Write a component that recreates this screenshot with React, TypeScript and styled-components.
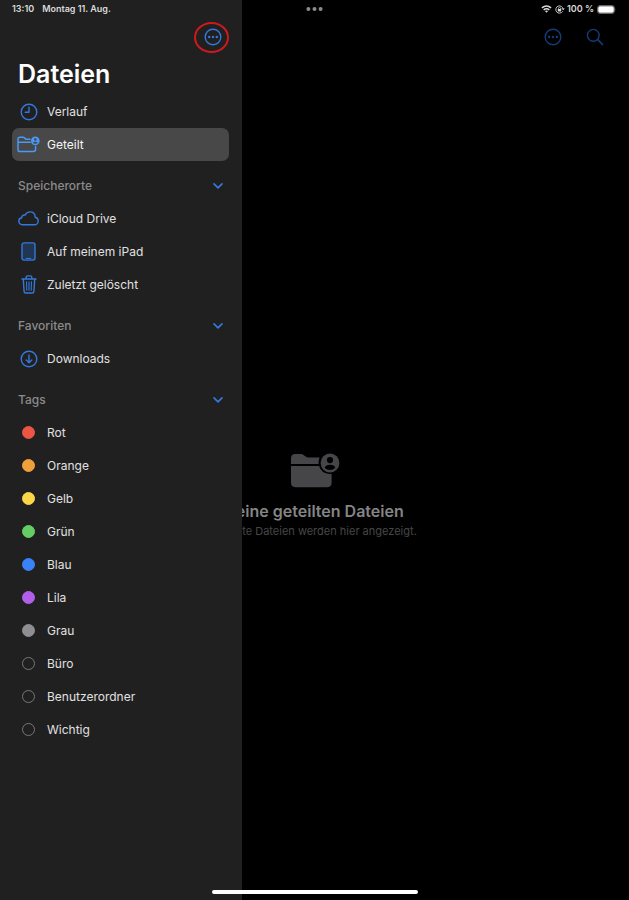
import React from "react";
import styled, { createGlobalStyle } from "styled-components";

const GlobalStyle = createGlobalStyle`
  *, *::before, *::after { box-sizing: border-box; }
  html, body { margin: 0; background: #000; }
  body, button, h1, h2, p {
    font-family: Inter, "Liberation Sans", sans-serif;
  }
  h1, h2, p, ul { margin: 0; padding: 0; }
  ul { list-style: none; }
`;

const blue = "#3478dc";

const Screen = styled.div`
  display: grid;
  grid-template-columns: 242px 1fr;
  grid-template-rows: 18px 1fr 10px;
  min-height: 100vh;
  background: #000;
  color: #e6e6e6;
`;

const StatusBar = styled.header`
  grid-column: 1 / -1;
  grid-row: 1;
  z-index: 3;
  display: grid;
  grid-template-columns: 1fr auto 1fr;
  align-items: center;
  padding: 0 12px;
  font-size: 9px;
  font-weight: 600;
  line-height: 18px;
  color: #dadada;
`;

const StatusGroup = styled.div<{ $end?: boolean; $gap: number }>`
  display: flex;
  align-items: center;
  justify-content: ${(p) => (p.$end ? "flex-end" : "flex-start")};
  gap: ${(p) => p.$gap}px;
  white-space: nowrap;
`;

const Icon = styled.svg`
  display: block;
  flex: none;
  overflow: visible;
  fill: none;
  stroke: currentColor;
  stroke-width: 1.4;
  stroke-linecap: round;
  stroke-linejoin: round;
`;

const Sidebar = styled.aside`
  grid-column: 1;
  grid-row: 1 / -1;
  z-index: 2;
  padding: 18px 13px 24px 12px;
  background: #202020;
`;

const SidebarTools = styled.div`
  display: flex;
  justify-content: flex-end;
  height: 38px;
  padding-right: 4px;
`;

const IconButton = styled.button<{ $dim?: boolean }>`
  position: relative;
  display: grid;
  place-items: center;
  width: 24px;
  height: 38px;
  padding: 0;
  border: 0;
  background: none;
  color: ${(p) => (p.$dim ? "#143c78" : blue)};
  cursor: pointer;
`;

const Ring = styled.span`
  position: absolute;
  top: 4px;
  left: -7px;
  width: 35px;
  height: 31px;
  border: 2px solid #d0191c;
  border-radius: 50%;
  pointer-events: none;
`;

const Title = styled.h1`
  padding: 1px 6px 4px;
  color: #fff;
  font-size: 25px;
  font-weight: 600;
  line-height: 34px;
`;

const SectionToggle = styled.button`
  display: flex;
  align-items: center;
  justify-content: space-between;
  width: 100%;
  height: 41px;
  padding: 8px 6px 0;
  border: 0;
  background: none;
  color: #8b8b8b;
  font-size: 12px;
  font-weight: 500;
  line-height: 18px;
  cursor: pointer;

  svg {
    color: ${blue};
  }
`;

const Row = styled.button<{ $active?: boolean }>`
  display: flex;
  align-items: center;
  gap: 7px;
  width: 100%;
  height: 33px;
  padding: 0 5px;
  border: 0;
  border-radius: 7px;
  background: ${(p) => (p.$active ? "#484848" : "none")};
  color: ${(p) => (p.$active ? "#f6f6f6" : "#e0e0e0")};
  font-size: 12px;
  line-height: 18px;
  text-align: left;
  cursor: pointer;
`;

const Glyph = styled.span<{ $bright?: boolean }>`
  display: grid;
  place-items: center;
  width: 23px;
  flex: none;
  color: ${(p) => (p.$bright ? "#4a98f7" : blue)};
`;

const Dot = styled.span<{ $color?: string }>`
  width: 13px;
  height: 13px;
  border-radius: 50%;
  border: 1px solid ${(p) => p.$color ?? "#777"};
  background: ${(p) => p.$color ?? "transparent"};
`;

const Content = styled.main`
  grid-column: 1 / -1;
  grid-row: 1 / -1;
  display: grid;
  grid-template-rows: 56px 1fr;
`;

const Toolbar = styled.div`
  display: flex;
  justify-content: flex-end;
  gap: 18px;
  padding: 18px 22px 0 0;
`;

const EmptyState = styled.section`
  display: flex;
  flex-direction: column;
  align-items: center;
  justify-content: center;
  padding-top: 36px;
  text-align: center;
  white-space: nowrap;
`;

const EmptyTitle = styled.h2`
  margin-top: 12px;
  color: #858585;
  font-size: 16px;
  font-weight: 600;
  line-height: 22px;
`;

const EmptyText = styled.p`
  color: #474747;
  font-size: 11px;
  line-height: 18px;
`;

const HomeIndicator = styled.div`
  grid-column: 1 / -1;
  grid-row: 3;
  z-index: 3;
  justify-self: center;
  width: 206px;
  height: 4px;
  border-radius: 2px;
  background: #fff;
`;

const MoreIcon = () => (
  <Icon width="18" height="18" viewBox="0 0 18 18">
    <circle cx="9" cy="9" r="7.8" />
    <g fill="currentColor" stroke="none">
      <circle cx="5.2" cy="9" r="1.2" />
      <circle cx="9" cy="9" r="1.2" />
      <circle cx="12.8" cy="9" r="1.2" />
    </g>
  </Icon>
);

const SearchIcon = () => (
  <Icon width="18" height="18" viewBox="0 0 18 18">
    <circle cx="7.3" cy="7.3" r="5.9" />
    <path d="M11.7 11.7l4.8 4.8" strokeWidth="1.7" />
  </Icon>
);

const ClockIcon = () => (
  <Icon width="18" height="18" viewBox="0 0 18 18">
    <circle cx="9" cy="9" r="7.8" />
    <path d="M9 4.2V9.3H5.2" />
  </Icon>
);

const SharedFolderIcon = () => (
  <Icon width="23" height="17" viewBox="0 0 23 17">
    <path d="M13 3.3H8.9L7.2 1.6Q6.7 1.2 6 1.2H2.9Q1 1.2 1 3.2V13.4Q1 15.5 3 15.5H16.4Q18.6 15.5 18.6 13.3V10.6M1 6.3H13.2" strokeWidth="1.5" />
    <circle cx="18.3" cy="4.9" r="4.3" fill="currentColor" stroke="none" />
    <circle cx="18.3" cy="3.5" r="1.3" fill="#484848" stroke="none" />
    <path d="M15.8 7.1Q16.4 5.7 18.3 5.7T20.8 7.1Q18.3 8.2 15.8 7.1Z" fill="#484848" stroke="none" />
  </Icon>
);

const CloudIcon = () => (
  <Icon width="21" height="15" viewBox="0 0 21 15">
    <path d="M5 13.8C2.5 13.8.8 12.3.8 10.2C.8 8.4 2 7.1 3.7 6.8C3.6 4.9 5.2 3.7 7 4.2C8 2.1 9.8.9 12 .9C15 .9 17.1 3 17.2 6.2C19.1 6.6 20.2 8.1 20.2 9.9C20.2 12.1 18.5 13.8 16.3 13.8Z" />
  </Icon>
);

const TabletIcon = () => (
  <Icon width="15" height="19" viewBox="0 0 15 19">
    <rect x="1" y=".9" width="13" height="17.2" rx="2" fill="#213653" />
    <path d="M5.3 16.5H9.7" strokeWidth="1" />
  </Icon>
);

const TrashIcon = () => (
  <Icon width="16" height="19" viewBox="0 0 16 19">
    <path d="M1 4H15M5.2 3.8V2.2Q5.2.9 6.6.9H9.4Q10.8.9 10.8 2.2V3.8M2.3 4.2L3.1 16.4Q3.2 18 4.8 18H11.2Q12.8 18 12.9 16.4L13.7 4.2" />
    <path d="M5.5 6.8L5.8 15.2M8 6.8V15.2M10.5 6.8L10.2 15.2" strokeWidth="1.1" />
  </Icon>
);

const DownloadIcon = () => (
  <Icon width="18" height="18" viewBox="0 0 18 18">
    <circle cx="9" cy="9" r="7.8" />
    <path d="M9 5V12.6M6.2 10L9 12.8L11.8 10" />
  </Icon>
);

const ChevronIcon = () => (
  <Icon width="10" height="6" viewBox="0 0 10 6">
    <path d="M1 .9L5 4.9L9 .9" strokeWidth="1.7" />
  </Icon>
);

const WifiIcon = () => (
  <Icon width="11" height="8" viewBox="0 0 11 8">
    <path d="M.9 2.9Q5.5-.9 10.1 2.9M2.7 4.9Q5.5 2.6 8.3 4.9" strokeWidth="1.5" strokeLinecap="butt" />
    <path d="M3.9 6.1Q5.5 4.9 7.1 6.1L5.5 7.8Z" fill="currentColor" stroke="none" />
  </Icon>
);

const RotationLockIcon = () => (
  <Icon width="9" height="9" viewBox="0 0 9 9">
    <path d="M7.6 6.6A3.7 3.7 0 1 1 8.2 4.2M7 3.5L8.2 4.7L9 3.3" strokeWidth=".9" />
    <rect x="2.8" y="4" width="3.4" height="2.5" rx=".4" fill="currentColor" stroke="none" />
    <path d="M3.5 4V3.3Q3.5 2.4 4.5 2.4T5.5 3.3V4" strokeWidth=".7" />
  </Icon>
);

const BatteryIcon = () => (
  <Icon width="20" height="9" viewBox="0 0 20 9">
    <rect x=".5" y=".5" width="17" height="8" rx="2.4" stroke="#666" strokeWidth="1" />
    <rect x="1.2" y="1.2" width="15.6" height="6.6" rx="1.7" fill="#fff" stroke="none" />
    <path d="M18.6 3.2Q19.8 4.5 18.6 5.8Z" fill="#666" stroke="none" />
  </Icon>
);

const MultitaskIcon = () => (
  <Icon width="17" height="4" viewBox="0 0 17 4">
    <g fill="#8c8c8c" stroke="none">
      <circle cx="2.4" cy="2" r="2" />
      <circle cx="8.5" cy="2" r="2" />
      <circle cx="14.6" cy="2" r="2" />
    </g>
  </Icon>
);

const EmptyFolderIcon = () => (
  <Icon width="50" height="35" viewBox="0 0 50 35">
    <g fill="#464648" stroke="none">
      <path d="M1 11V5.4Q1 1 5.4 1H10.7Q12.7 1 14.2 2.4L15.6 3.6Q16.7 4.5 18.1 4.5H29.5Q28.4 7.5 28.6 11Z" />
      <path d="M1 13H29.1Q31.4 20.5 39.5 21.1H41.6V29.5Q41.6 34.3 36.8 34.3H5.8Q1 34.3 1 29.5Z" />
      <circle cx="40" cy="10" r="9.4" />
    </g>
    <g fill="#000" stroke="none">
      <circle cx="40" cy="7.1" r="3.1" />
      <path d="M34.6 14.7Q35.7 11.8 40 11.8T45.4 14.7Q43.2 16.9 40 16.9T34.6 14.7Z" />
    </g>
  </Icon>
);

type Entry = { label: string; icon?: React.ReactNode; color?: string; active?: boolean };

const recents: Entry[] = [
  { label: "Verlauf", icon: <ClockIcon /> },
  { label: "Geteilt", icon: <SharedFolderIcon />, active: true },
];

const sections: { title: string; entries: Entry[] }[] = [
  {
    title: "Speicherorte",
    entries: [
      { label: "iCloud Drive", icon: <CloudIcon /> },
      { label: "Auf meinem iPad", icon: <TabletIcon /> },
      { label: "Zuletzt gelöscht", icon: <TrashIcon /> },
    ],
  },
  { title: "Favoriten", entries: [{ label: "Downloads", icon: <DownloadIcon /> }] },
  {
    title: "Tags",
    entries: [
      { label: "Rot", color: "#eb5545" },
      { label: "Orange", color: "#f0a03a" },
      { label: "Gelb", color: "#fad648" },
      { label: "Grün", color: "#64cd64" },
      { label: "Blau", color: "#3a82f7" },
      { label: "Lila", color: "#b15fe8" },
      { label: "Grau", color: "#8e8e93" },
      { label: "Büro" },
      { label: "Benutzerordner" },
      { label: "Wichtig" },
    ],
  },
];

const EntryList = ({ entries }: { entries: Entry[] }) => (
  <ul>
    {entries.map((e) => (
      <li key={e.label}>
        <Row type="button" $active={e.active} aria-current={e.active ? "page" : undefined}>
          <Glyph $bright={e.active}>{e.icon ?? <Dot $color={e.color} />}</Glyph>
          {e.label}
        </Row>
      </li>
    ))}
  </ul>
);

export default function App() {
  return (
    <>
      <GlobalStyle />
      <Screen>
        <StatusBar>
          <StatusGroup $gap={8}>
            <span>13:10</span>
            <span>Montag 11. Aug.</span>
          </StatusGroup>
          <MultitaskIcon />
          <StatusGroup $end $gap={3}>
            <WifiIcon />
            <RotationLockIcon />
            <span>100 %</span>
            <BatteryIcon />
          </StatusGroup>
        </StatusBar>

        <Sidebar>
          <SidebarTools>
            <IconButton type="button" aria-label="Mehr">
              <MoreIcon />
              <Ring />
            </IconButton>
          </SidebarTools>
          <Title>Dateien</Title>
          <nav>
            <EntryList entries={recents} />
            {sections.map((s) => (
              <section key={s.title}>
                <SectionToggle type="button" aria-expanded="true">
                  {s.title}
                  <ChevronIcon />
                </SectionToggle>
                <EntryList entries={s.entries} />
              </section>
            ))}
          </nav>
        </Sidebar>

        <Content>
          <Toolbar>
            <IconButton type="button" $dim aria-label="Optionen">
              <MoreIcon />
            </IconButton>
            <IconButton type="button" $dim aria-label="Suchen">
              <SearchIcon />
            </IconButton>
          </Toolbar>
          <EmptyState>
            <EmptyFolderIcon />
            <EmptyTitle>Keine geteilten Dateien</EmptyTitle>
            <EmptyText>Geteilte Dateien werden hier angezeigt.</EmptyText>
          </EmptyState>
        </Content>
        <HomeIndicator />
      </Screen>
    </>
  );
}
